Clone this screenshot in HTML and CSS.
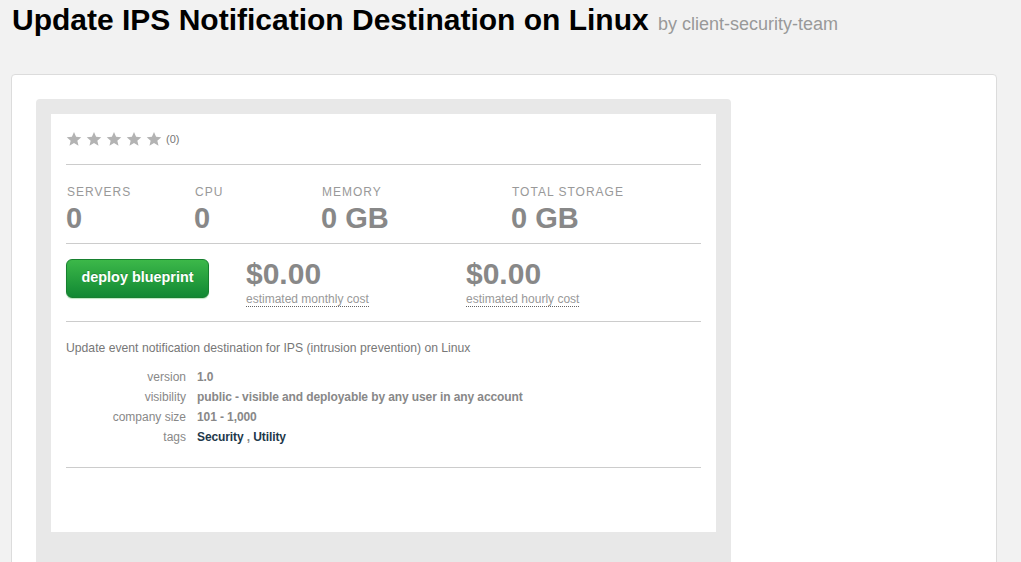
FILE: index.html
```html
<!DOCTYPE html>
<html>
<head>
<meta charset="utf-8">
<link rel="stylesheet" href="styles.css">
</head>
<body>
<header class="page-head">
  <h1 class="title">Update IPS Notification Destination on Linux <span class="by">by client-security-team</span></h1>
</header>
<main class="panel">
  <section class="frame">
    <div class="card">
      <div class="rating">
        <span class="stars">
          <svg class="star" viewBox="0 0 24 24"><path d="M12 1.5l3.1 7.2 7.8.7-5.9 5.1 1.8 7.6L12 18.1 5.2 22.1 7 14.5 1.1 9.4l7.8-.7z"/></svg>
          <svg class="star" viewBox="0 0 24 24"><path d="M12 1.5l3.1 7.2 7.8.7-5.9 5.1 1.8 7.6L12 18.1 5.2 22.1 7 14.5 1.1 9.4l7.8-.7z"/></svg>
          <svg class="star" viewBox="0 0 24 24"><path d="M12 1.5l3.1 7.2 7.8.7-5.9 5.1 1.8 7.6L12 18.1 5.2 22.1 7 14.5 1.1 9.4l7.8-.7z"/></svg>
          <svg class="star" viewBox="0 0 24 24"><path d="M12 1.5l3.1 7.2 7.8.7-5.9 5.1 1.8 7.6L12 18.1 5.2 22.1 7 14.5 1.1 9.4l7.8-.7z"/></svg>
          <svg class="star" viewBox="0 0 24 24"><path d="M12 1.5l3.1 7.2 7.8.7-5.9 5.1 1.8 7.6L12 18.1 5.2 22.1 7 14.5 1.1 9.4l7.8-.7z"/></svg>
        </span>
        <span class="count">(0)</span>
      </div>
      <div class="stats">
        <div class="stat s-servers"><div class="stat-label">Servers</div><div class="stat-value">0</div></div>
        <div class="stat s-cpu"><div class="stat-label">CPU</div><div class="stat-value">0</div></div>
        <div class="stat s-mem"><div class="stat-label">Memory</div><div class="stat-value">0 GB</div></div>
        <div class="stat s-store"><div class="stat-label">Total Storage</div><div class="stat-value">0 GB</div></div>
      </div>
      <div class="deploy-row">
        <button class="deploy-btn">deploy blueprint</button>
        <div class="cost cost-month"><div class="cost-value">$0.00</div><div class="cost-label">estimated monthly cost</div></div>
        <div class="cost"><div class="cost-value">$0.00</div><div class="cost-label">estimated hourly cost</div></div>
      </div>
      <div class="details">
        <p class="desc">Update event notification destination for IPS (intrusion prevention) on Linux</p>
        <dl class="meta">
          <dt>version</dt><dd>1.0</dd>
          <dt>visibility</dt><dd>public - visible and deployable by any user in any account</dd>
          <dt>company size</dt><dd>101 - 1,000</dd>
          <dt>tags</dt><dd><a class="tag">Security</a> , <a class="tag">Utility</a></dd>
        </dl>
      </div>
      <div class="card-foot"></div>
    </div>
  </section>
</main>
</body>
</html>
```

FILE: styles.css
```css
html, body {
  margin: 0;
  padding: 0;
  background: #f2f2f2;
  font-family: "Liberation Sans", Arial, sans-serif;
  overflow: hidden;
}

.page-head {
  padding: 3px 0 0 12px;
  height: 74px;
  box-sizing: border-box;
}

.title {
  margin: 0;
  font-size: 30px;
  font-weight: bold;
  color: #000;
  line-height: 34px;
}

.by {
  font-size: 18px;
  font-weight: normal;
  color: #999;
  margin-left: 1px;
}

.panel {
  margin-left: 11px;
  width: 986px;
  height: 600px;
  box-sizing: border-box;
  background: #fff;
  border: 1px solid #dcdcdc;
  border-radius: 4px;
  padding: 24px 0 0 24px;
}

.frame {
  width: 695px;
  height: 600px;
  box-sizing: border-box;
  background: #e8e8e8;
  border-radius: 4px;
  padding: 15px;
}

.card {
  background: #fff;
  height: 418px;
  padding: 0 15px;
  box-sizing: border-box;
}

.rating {
  display: flex;
  align-items: center;
  height: 51px;
  border-bottom: 1px solid #ccc;
  padding-bottom: 1px;
  box-sizing: border-box;
}

.stars {
  display: flex;
  gap: 4px;
}

.star {
  width: 16px;
  height: 16px;
  fill: #b3b3b3;
}

.count {
  font-size: 11px;
  color: #777;
  margin-left: 4px;
}

.stats {
  display: flex;
  height: 79px;
  border-bottom: 1px solid #ccc;
  box-sizing: border-box;
  padding-top: 20px;
}

.s-servers { width: 128px; }
.s-cpu { width: 127px; }
.s-mem { width: 190px; }

.stat-label {
  font-size: 12px;
  letter-spacing: 1px;
  text-transform: uppercase;
  color: #999;
  line-height: 14px;
  padding-left: 1px;
}

.stat-value {
  font-size: 29px;
  font-weight: bold;
  color: #888;
  line-height: 30px;
  margin-top: 4px;
}

.deploy-row {
  display: flex;
  align-items: flex-start;
  height: 78px;
  border-bottom: 1px solid #ccc;
  box-sizing: border-box;
  padding-top: 15px;
}

.deploy-btn {
  width: 143px;
  height: 39px;
  border: 1px solid #17802f;
  border-radius: 6px;
  background: linear-gradient(#3cb849, #118833);
  color: #fff;
  font-family: "Liberation Sans", Arial, sans-serif;
  font-weight: bold;
  font-size: 14.4px;
  padding: 0 0 3px 0;
  margin-right: 37px;
  box-shadow: 0 1px 1px #b9e6bf;
  text-shadow: 0 -1px 0 rgba(0,0,0,0.2);
}

.cost-month { width: 220px; }

.cost-value {
  font-size: 30px;
  font-weight: bold;
  color: #888;
  line-height: 30px;
}

.cost-label {
  display: inline-block;
  font-size: 12px;
  color: #999;
  line-height: 14px;
  border-bottom: 1px dotted #666;
}

.details {
  height: 146px;
  border-bottom: 1px solid #ccc;
  box-sizing: border-box;
  padding-top: 19px;
}

.desc {
  margin: 0 0 12px 0;
  font-size: 12.2px;
  color: #777;
  line-height: 14px;
}

.meta {
  display: grid;
  grid-template-columns: 120px 1fr;
  column-gap: 11px;
  margin: 0;
  font-size: 12px;
  line-height: 20px;
}

.meta dt {
  text-align: right;
  color: #888;
}

.meta dd {
  margin: 0;
  font-weight: bold;
  color: #888;
  letter-spacing: -0.1px;
}

.tag {
  color: #22384a;
}
```
